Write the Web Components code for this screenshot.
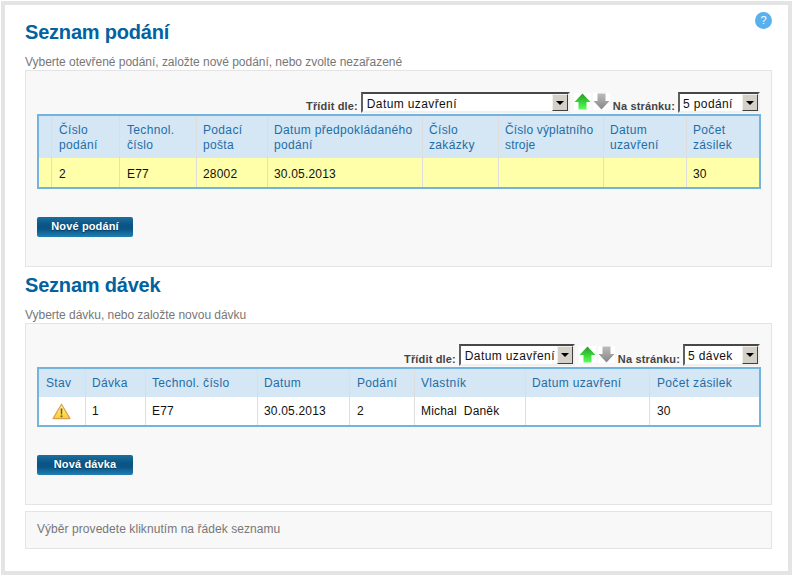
<!DOCTYPE html>
<html lang="cs">
<head>
<meta charset="utf-8">
<title>Seznam podání</title>
<style>
  html, body { margin: 0; padding: 0; background: #fff; overflow: hidden; }
  body { font: 12px "Liberation Sans", Arial, sans-serif; color: #111; }
  #cols-a { --cols: 13px 68px 77px 71px 155px 76px 105px 83px 72px; }
  #cols-b { --cols: 47px 60px 112px 92px 65px 111px 124px 109px; }
</style>
</head>
<body>
<app-frame>
  <help-badge></help-badge>

  <list-section heading="Seznam podání" note="Vyberte otevřené podání, založte nové podání, nebo zvolte nezařazené">
    <sort-bar slot="bar" style="--bar-top:21px;--bar-height:22px;--sel-height:21px;--arrow-top:1px">
      <sort-select style="width:209px;--sel-pad:4px" value="Datum uzavření"></sort-select>
      <sort-select slot="size" style="width:82px" value="5 podání"></sort-select>
    </sort-bar>
    <data-table id="cols-a">
      <table-row head style="--row-height:42px;--row-shift:2px">
        <table-cell></table-cell><table-cell pad>Číslo<br>podání</table-cell><table-cell pad>Technol.<br>číslo</table-cell><table-cell>Podací<br>pošta</table-cell><table-cell>Datum předpokládaného<br>podání</table-cell><table-cell>Číslo<br>zakázky</table-cell><table-cell style="--cell-spacing:.18px">Číslo výplatního<br>stroje</table-cell><table-cell>Datum<br>uzavření</table-cell><table-cell last>Počet<br>zásilek</table-cell>
      </table-row>
      <table-row style="--row-height:29px;--row-bg:#ffffaa;--row-shift:4px">
        <table-cell></table-cell><table-cell pad>2</table-cell><table-cell pad>E77</table-cell><table-cell>28002</table-cell><table-cell>30.05.2013</table-cell><table-cell></table-cell><table-cell></table-cell><table-cell></table-cell><table-cell last>30</table-cell>
      </table-row>
    </data-table>
    <blue-button slot="action">Nové podání</blue-button>
  </list-section>

  <list-section heading="Seznam dávek" note="Vyberte dávku, nebo založte novou dávku">
    <sort-bar slot="bar" style="--bar-top:20px;--bar-height:23px;--sel-height:22px;--arrow-top:2px">
      <sort-select style="width:116px;--sel-pad:4px" value="Datum uzavření"></sort-select>
      <sort-select slot="size" style="width:77px" value="5 dávek"></sort-select>
    </sort-bar>
    <data-table id="cols-b">
      <table-row head style="--row-height:28px">
        <table-cell pad>Stav</table-cell><table-cell>Dávka</table-cell><table-cell>Technol. číslo</table-cell><table-cell>Datum</table-cell><table-cell pad>Podání</table-cell><table-cell>Vlastník</table-cell><table-cell>Datum uzavření</table-cell><table-cell last pad>Počet zásilek</table-cell>
      </table-row>
      <table-row style="--row-height:28px;--row-bg:#fff">
        <table-cell pad><warn-icon></warn-icon></table-cell><table-cell>1</table-cell><table-cell>E77</table-cell><table-cell>30.05.2013</table-cell><table-cell pad>2</table-cell><table-cell>Michal&nbsp; Daněk</table-cell><table-cell></table-cell><table-cell last pad>30</table-cell>
      </table-row>
    </data-table>
    <blue-button slot="action">Nová dávka</blue-button>
  </list-section>

  <hint-panel>Výběr provedete kliknutím na řádek seznamu</hint-panel>
</app-frame>

<script>
(function() {
  // small helper, every element here is just a template in an open shadow root
  function define(name, html, setup) {
    const template = document.createElement('template');
    template.innerHTML = html;
    customElements.define(name, class extends HTMLElement {
      constructor() {
        super();
        this.attachShadow({ mode: 'open' }).appendChild(template.content.cloneNode(true));
      }
      connectedCallback() {
        if (setup) setup(this, this.shadowRoot);
      }
    });
  }

  define('app-frame', `
    <style>
      :host {
        display: block;
        position: relative;
        box-sizing: border-box;
        width: 791px;
        height: 574px;
        margin: 1px 0 0 1px;
        border: 4px solid #e4e4e4;
        background: #fff;
        padding: 15px 16px 0 20px;
      }
    </style>
    <slot></slot>`);

  define('help-badge', `
    <style>
      :host {
        position: absolute;
        top: 7px;
        right: 16px;
        width: 17px;
        height: 17px;
        border-radius: 50%;
        background: #58b1ee;
        color: #fff;
        font: 11px/17px "Liberation Sans", Arial, sans-serif;
        text-align: center;
      }
    </style>
    ?`);

  define('list-section', `
    <style>
      :host { display: block; margin-bottom: 6px; }
      h2 {
        margin: 0;
        font: bold 20px/24px "Liberation Sans", Arial, sans-serif;
        color: #0062a0;
        letter-spacing: -.2px;
      }
      p {
        margin: 12px 0 1px;
        font: 12px/13px "Liberation Sans", Arial, sans-serif;
        color: #777;
        letter-spacing: -.03px;
      }
      .panel {
        border: 1px solid #e4e4e4;
        background: #f8f8f8;
        padding: 0 10px 29px 11px;
      }
      .action { margin-top: 28px; }
    </style>
    <h2></h2>
    <p></p>
    <div class="panel">
      <slot name="bar"></slot>
      <slot></slot>
      <div class="action"><slot name="action"></slot></div>
    </div>`, (el, root) => {
      root.querySelector('h2').textContent = el.getAttribute('heading');
      root.querySelector('p').textContent = el.getAttribute('note');
    });

  define('sort-bar', `
    <style>
      :host {
        display: flex;
        justify-content: flex-end;
        align-items: flex-start;
        height: var(--bar-height);
        margin-top: var(--bar-top);
        padding-right: 1px;
        font: bold 11px/13px "Liberation Sans", Arial, sans-serif;
        color: #444;
      }
      .lbl { align-self: flex-end; margin: 0 3px 1px 0; letter-spacing: .15px; }
      svg { display: block; background: #fff; margin-top: var(--arrow-top); }
      .up { margin-left: 4px; margin-right: 2px; }
      .down { margin-right: 3px; }
    </style>
    <span class="lbl">Třídit dle:</span>
    <slot></slot>
    <svg class="up" width="17" height="17" viewBox="0 0 17 17">
      <defs><linearGradient id="g" x1="0" y1="0" x2="0" y2="1"><stop offset="0" stop-color="#2a9a2a"/><stop offset=".5" stop-color="#38d038"/><stop offset="1" stop-color="#5cff5c"/></linearGradient></defs>
      <path d="M8.5 .5 16.5 9H12.5V16.5H4.5V9H.5Z" fill="url(#g)"/>
    </svg>
    <svg class="down" width="17" height="17" viewBox="0 0 17 17">
      <defs><linearGradient id="h" x1="0" y1="0" x2="0" y2="1"><stop offset="0" stop-color="#bcbcbc"/><stop offset="1" stop-color="#868686"/></linearGradient></defs>
      <path d="M4.5 .5H12.5V8H16.5L8.5 16.5 .5 8H4.5Z" fill="url(#h)"/>
    </svg>
    <span class="lbl">Na stránku:</span>
    <slot name="size"></slot>`);

  define('sort-select', `
    <style>
      :host {
        display: flex;
        box-sizing: border-box;
        height: var(--sel-height);
        border: 2px solid;
        border-color: #484848 #f0f0f0 #f0f0f0 #606060;
        background: #fff;
        font: 12px/19px "Liberation Sans", Arial, sans-serif;
        color: #111;
      }
      .txt { flex: 1; padding: 1px 0 0 var(--sel-pad, 3px); letter-spacing: .38px; white-space: nowrap; overflow: hidden; }
      .btn {
        box-sizing: border-box;
        flex: none;
        display: flex;
        align-items: center;
        justify-content: center;
        width: 16px;
        background: #d4d0c8;
        border: 1px solid;
        border-color: #f2f0ea #404040 #404040 #f2f0ea;
      }
      .btn i { border: 4px solid transparent; border-top: 4px solid #000; border-bottom: 0; }
    </style>
    <span class="txt"></span>
    <span class="btn"><i></i></span>`, (el, root) => {
      root.querySelector('.txt').textContent = el.getAttribute('value');
    });

  define('data-table', `
    <style>
      :host { display: block; border: 2px solid #74b3dc; background: #fff; }
    </style>
    <slot></slot>`);

  define('table-row', `
    <style>
      :host {
        display: grid;
        grid-template-columns: var(--cols);
        min-height: var(--row-height);
        background: var(--row-bg, #fff);
        color: #111;
        --cell-spacing: .18px;
      }
      :host([head]) { background: #d5e6f4; color: #1d6ea8; --cell-spacing: .34px; }
    </style>
    <slot></slot>`);

  define('table-cell', `
    <style>
      :host {
        display: flex;
        align-items: center;
        box-sizing: border-box;
        border-right: 1px solid #dedede;
        padding: var(--row-shift, 0) 0 0 6px;
        font: 12px/15px "Liberation Sans", Arial, sans-serif;
        letter-spacing: var(--cell-spacing);
        white-space: nowrap;
      }
      :host([pad]) { padding-left: 7px; }
      :host([last]) { border-right: 0; }
    </style>
    <span><slot></slot></span>`);

  define('warn-icon', `
    <style>
      :host { display: block; margin-left: 6px; }
      svg { display: block; }
    </style>
    <svg width="19" height="17" viewBox="0 0 19 17">
      <defs><linearGradient id="w" x1="0" y1="0" x2="0" y2="1"><stop offset="0" stop-color="#fff6b0"/><stop offset="1" stop-color="#ffcc22"/></linearGradient></defs>
      <path d="M9.5 1.2 18 15.6H1Z" fill="url(#w)" stroke="#d9a24a" stroke-width="1.2" stroke-linejoin="round"/>
      <path d="M8.6 5.5h1.8l-.3 6h-1.2Z" fill="#6d5a2a"/>
      <rect x="8.6" y="12.4" width="1.8" height="1.8" fill="#6d5a2a"/>
    </svg>`);

  define('blue-button', `
    <style>
      :host {
        display: block;
        box-sizing: border-box;
        width: 96px;
        height: 20px;
        border-radius: 2px;
        background: linear-gradient(#1c6f9f, #0a5585 40%, #0a5585 60%, #2080b4);
        color: #fff;
        font: bold 11px/19px "Liberation Sans", Arial, sans-serif;
        letter-spacing: .15px;
        text-align: center;
        text-shadow: 0 1px 1px #043a5e;
      }
    </style>
    <slot></slot>`);

  define('hint-panel', `
    <style>
      :host {
        display: block;
        box-sizing: border-box;
        height: 38px;
        border: 1px solid #e4e4e4;
        background: #f8f8f8;
        padding-left: 11px;
        font: 12px/35px "Liberation Sans", Arial, sans-serif;
        color: #777;
        letter-spacing: .06px;
      }
    </style>
    <slot></slot>`);
})();
</script>
</body>
</html>
